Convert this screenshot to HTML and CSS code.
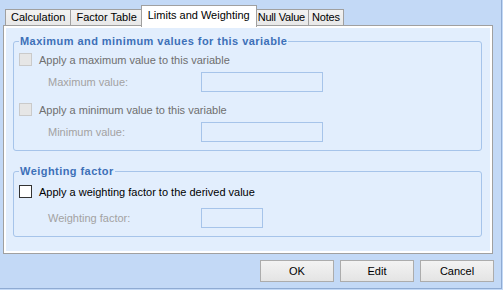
FILE: index.html
```html
<!DOCTYPE html>
<html>
<head>
<meta charset="utf-8">
<link rel="stylesheet" href="styles.css">
</head>
<body>
<div class="window">
  <div class="tabs">
    <div class="tab">Calculation</div>
    <div class="tab">Factor Table</div>
    <div class="tab active">Limits and Weighting</div>
    <div class="tab tight">Null Value</div>
    <div class="tab tight">Notes</div>
  </div>
  <div class="panel">
    <fieldset class="group">
      <legend>Maximum and minimum values for this variable</legend>
      <div class="check-row disabled first"><span class="box"></span><span class="check-text">Apply a maximum value to this variable</span></div>
      <div class="field-row"><span class="label">Maximum value:</span><span class="input wide"></span></div>
      <div class="check-row disabled"><span class="box"></span><span class="check-text">Apply a minimum value to this variable</span></div>
      <div class="field-row"><span class="label">Minimum value:</span><span class="input wide"></span></div>
    </fieldset>
    <fieldset class="group second">
      <legend>Weighting factor</legend>
      <div class="check-row first"><span class="box"></span><span class="check-text">Apply a weighting factor to the derived value</span></div>
      <div class="field-row spaced"><span class="label">Weighting factor:</span><span class="input narrow"></span></div>
    </fieldset>
  </div>
  <div class="buttons">
    <button class="btn">OK</button>
    <button class="btn">Edit</button>
    <button class="btn">Cancel</button>
  </div>
</div>
</body>
</html>
```
FILE: styles.css
```css
html, body {
  margin: 0;
  padding: 0;
  background: #c3d9f6;
}
body {
  font-family: "Liberation Sans", Arial, sans-serif;
  font-size: 11px;
  color: #000;
}
.window {
  box-sizing: border-box;
  width: 502px;
  height: 289px;
  padding-top: 5px;
  background: #c3d9f6;
  border-right: 1px solid #8fabd3;
  border-bottom: 1px solid #8fabd3;
  display: flex;
  flex-direction: column;
}
.tabs {
  display: flex;
  align-items: flex-end;
  height: 20px;
  padding-left: 5px;
}
.tab {
  box-sizing: border-box;
  height: 16px;
  line-height: 15px;
  padding: 0 5px;
  border: 1px solid #a0a0a0;
  border-bottom: none;
  background: linear-gradient(#f2f2f2, #e8e8e8);
  margin-left: -1px;
  white-space: nowrap;
}
.tab:first-child {
  margin-left: 0;
}
.tab.tight {
  padding: 0 3px;
  letter-spacing: -0.2px;
}
.tab.active {
  position: relative;
  z-index: 1;
  height: 22px;
  line-height: 18px;
  margin: 0 -2px -2px -2px;
  padding: 0 6px;
  background: #fff;
}
.panel {
  box-sizing: border-box;
  width: 490px;
  margin-left: 3px;
  border: 1px solid #a0a0a0;
  box-shadow: inset 0 0 0 2px #fff;
  background: #e2eefd;
  padding: 9px 10px 16px 9px;
}
.group {
  margin: 0;
  padding: 0 0 8px 5px;
  border: 1px solid #a6c4ea;
  border-radius: 3px;
  min-width: 0;
}
.group.second {
  margin-top: 14px;
}
.group legend {
  padding: 0 1px;
  font-weight: bold;
  line-height: 13px;
  letter-spacing: 0.45px;
  color: #3d70b8;
}
.check-row {
  display: flex;
  align-items: center;
  height: 13px;
  margin-top: 11px;
  white-space: nowrap;
}
.check-row.first {
  margin-top: 5px;
}
.group.second .check-row.first {
  margin-top: 7px;
}
.box {
  box-sizing: border-box;
  width: 13px;
  height: 13px;
  border: 1px solid #333;
  background: #fff;
  margin-right: 7px;
  flex: none;
}
.check-row.disabled .box {
  border-color: #cacaca;
  background: #e6e6e6;
}
.check-row.disabled .check-text {
  color: #6f6f6f;
}
.field-row {
  display: flex;
  align-items: center;
  height: 20px;
  margin-top: 6px;
}
.field-row.spaced {
  margin-top: 10px;
}
.label {
  box-sizing: border-box;
  width: 182px;
  padding-left: 29px;
  color: #a2a2a2;
}
.input {
  box-sizing: border-box;
  height: 20px;
  border: 1px solid #a6c4ea;
  background: #e2eefd;
}
.input.wide {
  width: 122px;
}
.input.narrow {
  width: 62px;
}
.buttons {
  display: flex;
  justify-content: flex-end;
  gap: 6px;
  margin-top: 6px;
  padding-right: 7px;
}
.btn {
  box-sizing: border-box;
  width: 74px;
  height: 22px;
  margin: 0;
  padding: 0;
  border: 1px solid #acacac;
  border-radius: 0;
  background: linear-gradient(#f3f3f3, #e4e4e4);
  font-family: "Liberation Sans", Arial, sans-serif;
  font-size: 11px;
  color: #000;
}
```
